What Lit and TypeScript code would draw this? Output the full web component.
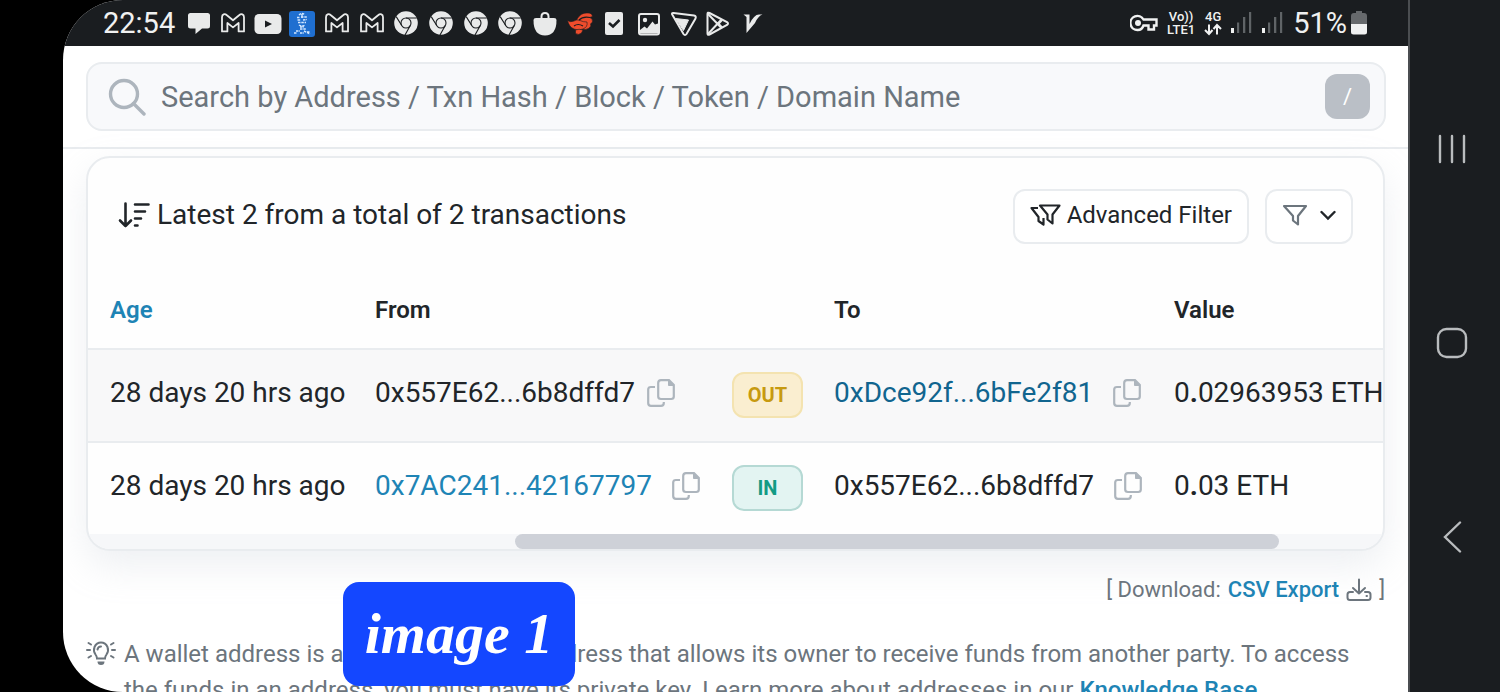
import { LitElement, html, svg, css, nothing } from "lit";
import { customElement, property } from "lit/decorators.js";

/* Glyphs of the notification area, all on a 28 x 28 grid. */
const chrome = svg`
  <circle cx="14" cy="14" r="11.8" fill="#e9eaea"/>
  <g fill="none" stroke="#1a1d20" stroke-width="1.1">
    <circle cx="14" cy="14" r="5"/>
    <path d="M14 9H24.8M9.7 16.5 4.200 7.6M18.300 16.500 13 26"/>
  </g>`;

const mail = svg`
  <path d="M3 22.4V8.2C3 5.2 5.800 4.400 7.6 6L14 11.2 20.4 6C22.2 4.4 25 5.2 25 8.2V22.4H19.6V14L14 18.4 8.4 14V22.4Z"
    fill="none" stroke="#e9eaea" stroke-width="1.800" stroke-linejoin="round"/>`;

const statusIcons = {
  chat: svg`<path d="M5.500 4H22.500Q25 4 25 6.500V17Q25 19.500 22.500 19.500H17L10.500 25V19.500H5.500Q3 19.500 3 17V6.500Q3 4 5.500 4Z" fill="#e9eaea"/>`,
  mail,
  video: svg`<rect x=".5" y="5" width="27" height="20" rx="4.500" fill="#e9eaea"/><path d="M11 11.500 18 15 11 18.500Z" fill="#1a1d20"/>`,
  photo: svg`<rect x="1" y="2" width="26" height="26" rx="3" fill="#1f6fd0"/>
    <g fill="none" stroke="#d3e8ff" stroke-width="1.400" stroke-dasharray="2.5 .8">
      <path d="M11 6Q14 3 17 6M9 8.500H12M13 8H19M9.500 11H13M15 11 19 10.500M10 13.500H18M11 16Q14 18 17 16M12 18H16M14 5V9M12 20H18M6 24H9M8 22H12M12 24H16M16 22 22 25M19 23H22"/>
    </g>`,
  chrome,
  bag: svg`<path d="M2.500 11Q2.500 9 5 9H23Q25.500 9 25.500 11 25.500 26.500 14 26.500 2.500 26.500 2.500 11Z" fill="#e9eaea"/>
    <path d="M10.500 10V7.500Q10.500 4 14 4T17.500 7.500V10" fill="none" stroke="#e9eaea" stroke-width="2"/>`,
  bird: svg`<g fill="#ee4c2c" stroke="#1a1d20" stroke-width=".6">
      <path d="M11 10Q15 3.500 21 4 26 3.500 26.500 7.500L23.500 8.500Q27 9 26.500 13L24.500 15Q26 17 22.500 19.500 19 22 15.500 19L11 15Z"/>
      <path d="M1.500 11.500Q4 13.500 8 12 11 10 14 11.500 17 13 21 13 22 18 17 20 12 22 8 20 3 18 1.500 11.500Z"/>
      <path d="M9.500 21Q13 19.500 17 21L15.500 24Q12.500 26.500 9.500 24.500Z"/>
    </g>
    <path d="M13 11Q17 7 24 8.500M8 17Q12 14 17 17" fill="none" stroke="#1a1d20" stroke-width="1.200"/>`,
  task: svg`<rect x="5" y="3" width="18" height="23" rx="2" fill="#e9eaea"/><path d="M9 14 13 17.500 19.500 11" fill="none" stroke="#1a1d20" stroke-width="2.600"/>`,
  image: svg`<rect x="4" y="5" width="20" height="20.500" rx="2" fill="none" stroke="#e9eaea" stroke-width="2"/>
    <circle cx="10" cy="11" r="2.200" fill="#e9eaea"/><path d="M5 21 9.500 17.500 12 19.500 17.500 12.500 20 15.500 23 14.500V24.500H5Z" fill="#e9eaea"/>`,
  shield: svg`<path d="M2.500 6Q1 3.800 3.500 4L24 6.500Q26.500 7 25.500 9.500L16.500 25Q15 27 13.500 25Z" fill="none" stroke="#e9eaea" stroke-width="2"/>
    <path d="M5.500 9.500 18.500 11 13.500 21.500Z" fill="#e9eaea" stroke="#e9eaea"/>`,
  store: svg`<path d="M3.500 5Q3.500 3 5.500 4L23 13Q25 14.500 23 16L5.500 25.500Q3.500 26.500 3.500 24.500Z" fill="none" stroke="#e9eaea" stroke-width="2"/>
    <path d="M4 5 17.500 19M4 25 17.500 10.500M18 11 14.500 14.700 18 18.500" fill="none" stroke="#e9eaea" stroke-width="2"/>`,
  tick: svg`<path d="M4.500 5.500H10.500V15Q15 5.500 20 5.500H23.500Q19 7 16 14L7.500 24V8Z" fill="#e9eaea"/>`,
};

type StatusIcon = keyof typeof statusIcons;

const notifications: StatusIcon[] = [
  "chat", "mail", "video", "photo", "mail", "mail", "chrome", "chrome", "chrome",
  "chrome", "bag", "bird", "task", "image", "shield", "store", "tick",
];

const copyGlyph = html`<svg width="28" height="28" viewBox="0 0 28 28" fill="none" stroke="#adb5bd" stroke-width="2.200" aria-hidden="true">
  <path d="M8 8H4Q1.200 8 1.200 10.500V24Q1.200 26.800 4 26.800H14Q16.800 26.800 16.800 24V23"/>
  <path d="M14 1.200H22L26.800 6V17.500Q26.800 20 24.200 20H14Q11.200 20 11.200 17.500V4Q11.200 1.200 14 1.200Z"/>
  <path d="M21.500 1.500V6.500H26.500Z" fill="#adb5bd" stroke-width="1"/>
</svg>`;

const funnel = "M2 3H24L16 13V21.500L11 17.500V13Z";

interface Party {
  address: string;
  kind: "own" | "link" | "visited";
  tight?: boolean;
}

interface Transfer {
  age: string;
  from: Party;
  direction: "OUT" | "IN";
  to: Party;
  whole: string;
  fraction: string;
}

const transfers: Transfer[] = [
  {
    age: "28 days 20 hrs ago",
    from: { address: "0x557E62...6b8dffd7", kind: "own", tight: true },
    direction: "OUT",
    to: { address: "0xDce92f...6bFe2f81", kind: "visited" },
    whole: "0",
    fraction: "02963953 ETH",
  },
  {
    age: "28 days 20 hrs ago",
    from: { address: "0x7AC241...42167797", kind: "link" },
    direction: "IN",
    to: { address: "0x557E62...6b8dffd7", kind: "own" },
    whole: "0",
    fraction: "03 ETH",
  },
];

@customElement("status-bar")
export class StatusBar extends LitElement {
  static styles = css`
    :host {
      display: flex;
      align-items: center;
      height: 46px;
      padding: 0 41px 0 40px;
      background: #1a1d20;
      color: #f0f1f1;
      font-size: 29px;
      line-height: 46px;
    }
    svg { display: block; }
    .notes {
      display: grid;
      grid-template-columns: repeat(17, 1fr);
      justify-items: center;
      width: 589px;
      margin-left: 6px;
    }
    .right {
      display: flex;
      align-items: center;
      margin-left: auto;
      gap: 9px;
    }
    .net {
      display: grid;
      justify-items: center;
      font-size: 13px;
      font-weight: 500;
      line-height: 13px;
    }
    .battery { display: flex; align-items: center; gap: 4px; }
  `;

  private signal() {
    return html`<svg width="22" height="24" viewBox="0 0 22 24" aria-hidden="true">
      <rect x="0" y="17" width="3" height="5" fill="#f0f1f1"/>
      <path d="M6 11.500H8.200V22H6ZM12 6H14.300V22H12ZM18 1H20.200V22H18Z" fill="#606467"/>
    </svg>`;
  }

  render() {
    return html`
      <span>22:54</span>
      <div class="notes">
        ${notifications.map((name) => html`<svg width="28" height="28" viewBox="0 0 28 28" aria-hidden="true">${statusIcons[name]}</svg>`)}
      </div>
      <div class="right">
        <svg width="28" height="20" viewBox="0 0 28 20" aria-hidden="true">
          <path d="M13.500 6.500H26.500V12.500H24V16.500H18.500V12.500H13.500Q12 17 7.800 17A7 7 0 1 1 13.500 6.500Z" fill="none" stroke="#f0f1f1" stroke-width="2.400"/>
          <circle cx="8" cy="10" r="3" fill="#f0f1f1"/>
        </svg>
        <div class="net"><span>Vo))</span><span>LTE1</span></div>
        <div class="net">
          <span>4G</span>
          <svg width="18" height="13" viewBox="0 0 18 13" fill="none" stroke="#f0f1f1" stroke-width="2" aria-hidden="true">
            <path d="M5 1.500V10.500M1 7 5 11 8.500 7M13 11.500V2.500M9.500 6 13 2 17 6"/>
          </svg>
        </div>
        ${this.signal()} ${this.signal()}
        <div class="battery">
          <span>51%</span>
          <svg width="16" height="24" viewBox="0 0 16 24" aria-hidden="true">
            <path d="M5 0H11V2H5ZM0 5Q0 2 3 2H13Q16 2 16 5V13H0Z" fill="#66696c"/>
            <path d="M0 13H16V21Q16 23.500 13.500 23.500H2.500Q0 23.500 0 21Z" fill="#f0f1f1"/>
          </svg>
        </div>
      </div>
    `;
  }
}

@customElement("nav-rail")
export class NavRail extends LitElement {
  static styles = css`
    :host {
      display: grid;
      grid-template-rows: repeat(3, 194px);
      align-content: center;
      padding: 0 6px 6px 0;
      background: #1a1d20;
      border-left: 2px solid #4b4e51;
    }
    .key {
      display: grid;
      place-items: center;
      padding: 0;
      border: 0;
      background: none;
    }
    svg { fill: none; stroke: #b9bcbe; stroke-width: 2.4; }
  `;

  render() {
    return html`
      <button class="key" aria-label="Recent apps">
        <svg width="32" height="32" viewBox="0 0 32 32"><path d="M4 3V29M16 3V29M28 3V29" stroke-linecap="round"/></svg>
      </button>
      <button class="key" aria-label="Home">
        <svg width="32" height="32" viewBox="0 0 32 32"><rect x="2" y="2" width="28" height="28" rx="8.500"/></svg>
      </button>
      <button class="key" aria-label="Back">
        <svg width="32" height="32" viewBox="0 0 32 32"><path d="M24 1.500 9 16 24 30.500" stroke-linecap="round"/></svg>
      </button>
    `;
  }
}

@customElement("party-cell")
export class PartyCell extends LitElement {
  @property({ attribute: false }) party!: Party;

  static styles = css`
    :host { display: flex; align-items: center; gap: 20px; }
    :host([tight]) { gap: 12px; }
    .link { color: #1e84b5; text-decoration: none; }
    .visited { color: #11658f; text-decoration: none; }
    .copy {
      display: grid;
      padding: 0;
      border: 0;
      background: none;
    }
  `;

  render() {
    const { address, kind } = this.party;
    return html`
      ${kind === "own" ? html`<span>${address}</span>` : html`<a class=${kind} href="#${address}">${address}</a>`}
      <button class="copy" aria-label="Copy address">${copyGlyph}</button>
    `;
  }
}

@customElement("transfer-card")
export class TransferCard extends LitElement {
  static styles = css`
    :host {
      display: block;
      overflow: hidden;
      border: 2px solid #e9ecef;
      border-radius: 24px;
      background: #fefefe;
      box-shadow: 0 15px 36px rgba(189, 197, 209, 0.25);
      color: #212529;
    }
    .head {
      display: flex;
      align-items: center;
      gap: 16px;
      padding: 31px 30px 26px;
    }
    .title {
      display: flex;
      align-items: center;
      gap: 7px;
      margin: 0 auto 0 0;
      padding-bottom: 4px;
      font-size: 28px;
      font-weight: 400;
      line-height: 36px;
    }
    .btn {
      display: flex;
      align-items: center;
      gap: 6px;
      height: 55px;
      padding: 0 15px 4px;
      border: 2px solid #e9ecef;
      border-radius: 12px;
      background: #fff;
      color: #212529;
      font: 24px/32px Roboto, sans-serif;
    }
    .drop { gap: 12px; }
    table {
      width: 100%;
      border-collapse: collapse;
      table-layout: fixed;
      white-space: nowrap;
    }
    .c-age { width: 265px; }
    .c-from { width: 357px; }
    .c-dir { width: 102px; }
    .c-to { width: 340px; }
    th, td { padding: 0 0 6px 22px; text-align: left; }
    th {
      height: 76px;
      padding: 2px 0 0 22px;
      font-size: 24px;
      font-weight: 600;
    }
    td {
      height: 85px;
      border-top: 2px solid #e9ecef;
      font-size: 28px;
    }
    .dir { height: 89px; padding-bottom: 2px; }
    .shaded { background: #f8f8f9; }
    .sort { color: #1e84b5; text-decoration: none; }
    .tag {
      display: block;
      box-sizing: border-box;
      width: 71px;
      border: 2px solid;
      border-radius: 12px;
      font-size: 20px;
      font-weight: 700;
      line-height: 42px;
      text-align: center;
    }
    .OUT { background: #faeed0; border-color: #f4e3b0; color: #c79a10; }
    .IN { background: #e3f4f2; border-color: #b5d9d4; color: #129b84; }
    .dot { font-weight: 700; }
    .track { height: 15px; background: #f6f7f9; }
    .thumb {
      height: 15px;
      margin: 0 8% 0 33%;
      border-radius: 8px;
      background: #ced1d8;
    }
  `;

  render() {
    return html`
      <div class="head">
        <h2 class="title">
          <svg width="32" height="28" viewBox="0 0 32 28" fill="none" stroke="#212529" stroke-width="2.600" stroke-linecap="round" stroke-linejoin="round" aria-hidden="true">
            <path d="M7.500 2.500V25M2 19.500 7.500 25 13 19.500M17 3.500H30.500M17 10.500H27M17 17.500H23M17 24.500H19.500"/>
          </svg>
          Latest 2 from a total of 2 transactions
        </h2>
        <button class="btn">
          <svg width="31" height="24" viewBox="0 0 31 24" fill="none" stroke="#212529" stroke-width="2.200" stroke-linejoin="round" aria-hidden="true">
            <path d="M10 2.500H29.500L22.500 11.500V20.500L17.500 16.500V11.500ZM8 5H1.500L8.500 14V18L13.500 21.500V15"/>
          </svg>
          Advanced Filter
        </button>
        <button class="btn drop" aria-label="Filter">
          <svg width="26" height="24" viewBox="0 0 26 24" fill="none" stroke="#6c757d" stroke-width="2.200" stroke-linejoin="round" aria-hidden="true"><path d=${funnel}/></svg>
          <svg width="16" height="12" viewBox="0 0 16 12" fill="none" stroke="#212529" stroke-width="2.400" stroke-linecap="round" aria-hidden="true"><path d="M1.500 3 8 9.500 14.500 3"/></svg>
        </button>
      </div>
      <table>
        <colgroup><col class="c-age"><col class="c-from"><col class="c-dir"><col class="c-to"><col></colgroup>
        <thead>
          <tr>
            <th><a class="sort" href="#age">Age</a></th>
            <th>From</th>
            <th></th>
            <th>To</th>
            <th>Value</th>
          </tr>
        </thead>
        <tbody>
          ${transfers.map((t, i) => html`
            <tr class=${i % 2 ? nothing : "shaded"}>
              <td>${t.age}</td>
              <td><party-cell .party=${t.from} ?tight=${t.from.tight}></party-cell></td>
              <td class="dir"><span class="tag ${t.direction}">${t.direction}</span></td>
              <td><party-cell .party=${t.to}></party-cell></td>
              <td>${t.whole}<span class="dot">.</span>${t.fraction}</td>
            </tr>`)}
        </tbody>
      </table>
      <div class="track"><div class="thumb"></div></div>
    `;
  }
}

@customElement("app-root")
export class AppRoot extends LitElement {
  static styles = css`
    :host {
      display: grid;
      grid-template-columns: minmax(0, 1fr) 92px;
      height: 100vh;
      padding-left: 63px;
      box-sizing: border-box;
      overflow: hidden;
      background: #000;
      font-family: Roboto, sans-serif;
    }
    .screen {
      position: relative;
      overflow: hidden;
      border-radius: 60px 0 0 60px;
      background: #fff;
      color: #6c757d;
    }
    .top {
      padding: 16px 22px 16px 23px;
      border-bottom: 2px solid #e9ecef;
    }
    .search {
      display: flex;
      align-items: center;
      gap: 15px;
      height: 65px;
      padding: 0 14px 0 20px;
      border: 2px solid #e9ecef;
      border-radius: 16px;
      background: #f8f9fb;
    }
    .glass { display: flex; }
    .field {
      flex: 1;
      min-width: 0;
      padding: 0;
      border: 0;
      outline: 0;
      background: none;
      color: #212529;
      font: 29px/36px Roboto, sans-serif;
    }
    .field::placeholder { color: #6c757d; opacity: 1; }
    .hint {
      width: 45px;
      border-radius: 12px;
      background: #babfc6;
      color: #fff;
      font: 22px/45px Roboto, sans-serif;
      text-align: center;
    }
    .main { padding: 7px 23px 0; }
    .export {
      display: flex;
      align-items: center;
      justify-content: flex-end;
      gap: 7px;
      margin: 23px 0 0;
      font-size: 22px;
      line-height: 32px;
    }
    .link { color: #1e84b5; font-weight: 500; text-decoration: none; }
    .note {
      display: flex;
      gap: 8px;
      margin: 30px 0 0;
      font-size: 24px;
      line-height: 36px;
    }
    .note svg { flex: none; margin-top: 4px; }
    .caption {
      position: absolute;
      left: 280px;
      bottom: 6px;
      width: 232px;
      border-radius: 16px;
      background: #1447ff;
      color: #fff;
      font: italic 700 58px/104px "Liberation Serif", serif;
      text-align: center;
    }
  `;

  render() {
    return html`
      <div class="screen">
        <status-bar></status-bar>
        <header class="top">
          <div class="search">
            <label class="glass" for="q" aria-label="Search">
              <svg width="38" height="38" viewBox="0 0 38 38" fill="none" stroke="#adb5bd" stroke-width="3.400" aria-hidden="true">
                <circle cx="16" cy="16" r="13.500"/><path d="M25.500 25.500 36 36" stroke-linecap="round"/>
              </svg>
            </label>
            <input id="q" class="field" type="text" placeholder="Search by Address / Txn Hash / Block / Token / Domain Name">
            <kbd class="hint">/</kbd>
          </div>
        </header>
        <main class="main">
          <transfer-card></transfer-card>
          <p class="export">
            <span>[ Download:</span>
            <a class="link" href="#csv">CSV Export</a>
            <svg width="26" height="24" viewBox="0 0 26 24" fill="none" stroke="#6c757d" stroke-width="2" stroke-linecap="round" stroke-linejoin="round" aria-hidden="true">
              <path d="M13 1.500V15.500M7 10 13 15.500 19 10M7 14H4Q1.500 14 1.500 16.500V19.500Q1.500 22 4 22H22Q24.500 22 24.500 19.500V16.500Q24.500 14 22 14H19M20.500 18H21"/>
            </svg>
            <span>]</span>
          </p>
          <div class="note">
            <svg width="30" height="26" viewBox="0 0 30 26" fill="none" stroke="#6c757d" stroke-width="2" stroke-linecap="round" aria-hidden="true">
              <path d="M11 18.500Q11 16.500 9.500 14.500 7 11 8.500 7 10.500 2.500 15 2.500T21.500 7Q23 11 20.500 14.500 19 16.500 19 18.500ZM11.500 9.500Q12 6.500 15 6.500M1 10H4M26 10H29M2.500 3 5 4.500M27.500 3 25 4.500M2.500 17.500 5 16M27.500 17.500 25 16"/>
              <path d="M11.500 21.500H18.500Q18.500 25 15 25T11.500 21.500Z" fill="#6c757d" stroke="none"/>
            </svg>
            <span>A wallet address is a publicly available address that allows its owner to receive funds from another party. To access the funds in an address, you must have its private key. Learn more about addresses in our <a class="link" href="#kb">Knowledge Base</a>.</span>
          </div>
        </main>
        <div class="caption">image 1</div>
      </div>
      <nav-rail></nav-rail>
    `;
  }
}
